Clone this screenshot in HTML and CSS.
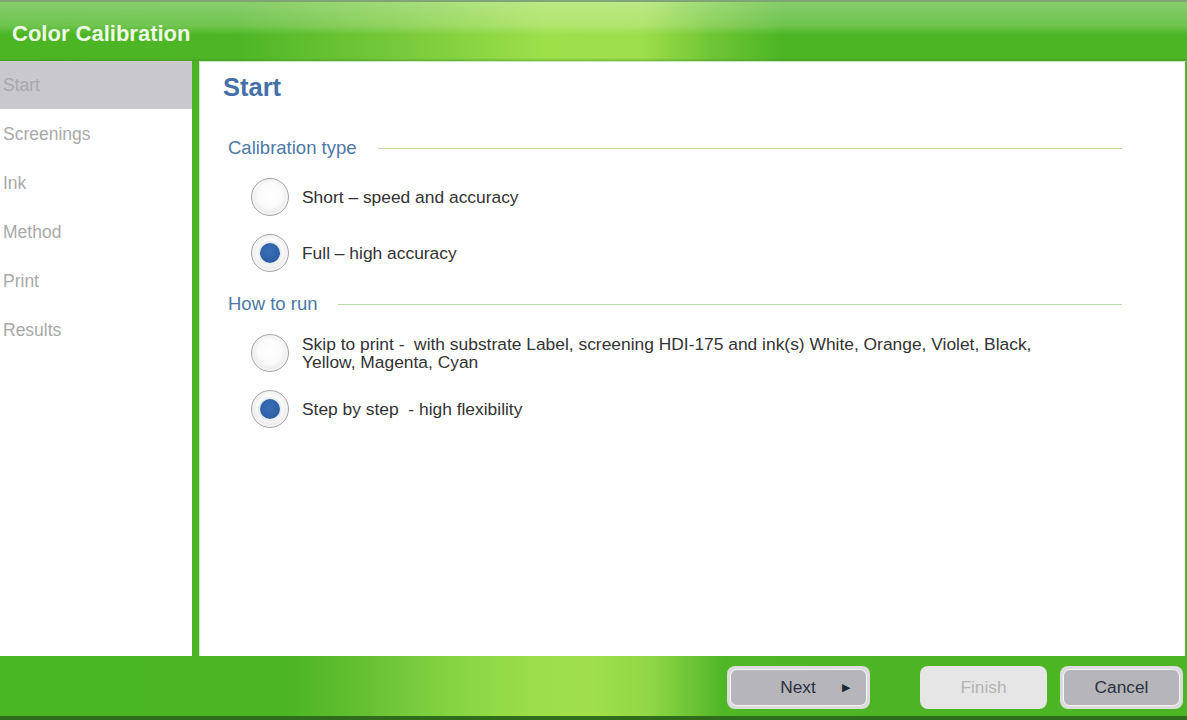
FILE: index.html
```html
<!DOCTYPE html>
<html lang="en">
<head>
    <meta charset="UTF-8">
    <title>Color Calibration</title>
    <link rel="stylesheet" href="styles.css">
</head>
<body>
    <div class="window">
        <div class="header">
            <div class="header-title">Color Calibration</div>
        </div>
        <div class="main">
            <!-- Steps -->
            <div class="sidebar">
                <div class="step active">Start</div>
                <div class="step">Screenings</div>
                <div class="step">Ink</div>
                <div class="step">Method</div>
                <div class="step">Print</div>
                <div class="step">Results</div>
            </div>
            <div class="divider"></div>
            <!-- Page -->
            <div class="content">
                <div class="page-title">Start</div>

                <div class="section-head first">
                    <span class="section-label">Calibration type</span>
                    <span class="section-line"></span>
                </div>
                <div class="option">
                    <span class="radio"></span>
                    <span class="option-text">Short – speed and accuracy</span>
                </div>
                <div class="option">
                    <span class="radio checked"></span>
                    <span class="option-text">Full – high accuracy</span>
                </div>

                <div class="section-head">
                    <span class="section-label">How to run</span>
                    <span class="section-line"></span>
                </div>
                <div class="option">
                    <span class="radio"></span>
                    <span class="option-text wrap">Skip to print -&nbsp; with substrate Label, screening HDI-175 and ink(s) White, Orange, Violet, Black, Yellow, Magenta, Cyan</span>
                </div>
                <div class="option">
                    <span class="radio checked"></span>
                    <span class="option-text">Step by step &nbsp;- high flexibility</span>
                </div>
            </div>
        </div>
        <div class="footer">
            <div class="btn next"><span class="btn-face">Next <span class="arrow">&#9654;</span></span></div>
            <div class="btn finish"><span class="btn-face">Finish</span></div>
            <div class="btn cancel"><span class="btn-face">Cancel</span></div>
        </div>
    </div>
</body>
</html>
```

FILE: styles.css
```css
body {
    margin: 0;
    padding: 0;
    font-family: "Liberation Sans", Arial, sans-serif;
    background: #fff;
}
.window {
    width: 1187px;
    height: 720px;
    display: flex;
    flex-direction: column;
    overflow: hidden;
}
.header {
    height: 61px;
    flex: none;
    display: flex;
    align-items: center;
    padding-left: 12px;
    box-sizing: border-box;
    border-top: 2px solid #7fa672;
    background:
        linear-gradient(180deg, rgba(255,255,255,0.32) 0%, rgba(255,255,255,0.2) 40%, rgba(255,255,255,0) 55%, rgba(0,0,0,0) 95%, rgba(60,130,40,0.4) 100%),
        linear-gradient(90deg, #4bb524 0%, #4eb626 20%, #7ccc3c 35%, #9de04a 46%, #9ede4b 54%, #6fc634 60%, #4bb524 66%, #4bb524 100%);
}
.header-title {
    color: #eef8e6;
    font-size: 22px;
    font-weight: bold;
    margin-top: 4px;
}
.main {
    flex: 1;
    display: flex;
    min-height: 0;
}
.sidebar {
    width: 192px;
    flex: none;
    background: #fff;
}
.step {
    height: 49px;
    line-height: 49px;
    padding-left: 3px;
    font-size: 17.5px;
    color: #a9a9a9;
}
.step.active {
    background: #c9c8cc;
    color: #a7a7ac;
    height: 48px;
    line-height: 48px;
    margin-bottom: 1px;
}
.divider {
    width: 7px;
    flex: none;
    background: #4cb226;
}
.content {
    flex: 1;
    background: #fff;
    border-left: 1px solid #c8eab4;
    border-top: 1px solid #c8eab4;
    border-right: 2px solid #4cb226;
    padding: 12px 63px 0 23px;
}
.page-title {
    font-size: 25.5px;
    font-weight: bold;
    color: #4670a8;
    line-height: 26px;
}
.section-head {
    display: flex;
    align-items: center;
    height: 20px;
    margin: 22px 0 20px 5px;
}
.section-head.first {
    margin-top: 38px;
}
.section-label {
    font-size: 18.5px;
    color: #4c78a8;
    margin-right: 21px;
}
.section-line {
    flex: 1;
    height: 1px;
    background: #b9dca6;
}
.option {
    display: flex;
    align-items: center;
    min-height: 38px;
    margin: 0 0 18px 28px;
}
.radio {
    width: 36px;
    height: 36px;
    flex: none;
    border-radius: 50%;
    border: 1px solid #a4a4a4;
    background: radial-gradient(circle at 50% 45%, #ffffff 0%, #fbfbfb 45%, #e4e4e4 75%, #d4d4d4 100%);
    box-shadow: inset 0 0 0 2px #f4f4f4;
    display: flex;
    align-items: center;
    justify-content: center;
    margin-right: 13px;
}
.radio.checked::after {
    content: "";
    width: 20px;
    height: 20px;
    border-radius: 50%;
    background: radial-gradient(circle at 45% 40%, #3a6fb8 0%, #2c5ea4 70%, #24508f 100%);
    box-shadow: 0 0 0 2px #e9edf2;
}
.option-text {
    font-size: 17.4px;
    color: #333;
    line-height: 18px;
}
.option-text.wrap {
    max-width: 760px;
}
.footer {
    height: 64px;
    flex: none;
    box-sizing: border-box;
    display: flex;
    align-items: flex-start;
    justify-content: flex-end;
    padding: 10px 4px 0 0;
    border-bottom: 4px solid #2f6d1d;
    background: linear-gradient(90deg, #4ab522 0%, #4bb523 24%, #62bf30 30%, #86d442 38%, #9bde4a 45%, #a0df4b 50%, #8fd646 55%, #6fc634 58%, #4fb626 61%, #4bb524 100%);
}
.btn {
    height: 43px;
    box-sizing: border-box;
    padding: 3px;
    border-radius: 8px;
    background: #dcdcdc;
    display: flex;
}
.btn-face {
    flex: 1;
    display: flex;
    align-items: center;
    justify-content: center;
    border-radius: 7px;
    border: 1px solid #f6f6f6;
    background: #b6b6ba;
    color: #2a3040;
    font-size: 17.3px;
}
.next {
    width: 143px;
    margin-right: 50px;
}
.next .btn-face {
    position: relative;
    padding-right: 1px;
}
.arrow {
    position: absolute;
    right: 16px;
    font-size: 11px;
    color: #1f2838;
}
.finish {
    width: 127px;
    margin-right: 13px;
    background: #e6e6e6;
}
.finish .btn-face {
    background: #e6e6e6;
    border-color: #e6e6e6;
    color: #b3b3b3;
}
.cancel {
    width: 123px;
}
```
